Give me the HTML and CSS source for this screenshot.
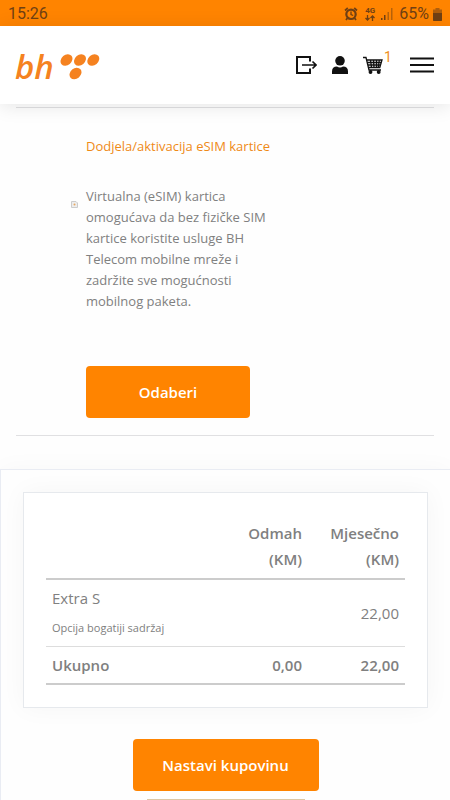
FILE: index.html
```html
<!DOCTYPE html>
<html lang="bs">
<head>
<meta charset="utf-8">
<meta name="viewport" content="width=device-width, initial-scale=1">
<title>BH Telecom</title>
<link rel="stylesheet" href="styles.css">
</head>
<body>
<div class="status">
  <span>15:26</span>
  <div class="status-icons">
    <svg width="14" height="14" viewBox="0 0 14 14" fill="none" stroke="currentColor"><circle cx="7" cy="7.3" r="4.7" stroke-width="2.200"/><path d="M7 4.500v3l2.200 1" stroke-width="1.300"/><path d="M1 3.500L3.800 1M13 3.500L10.200 1M3.300 11.200L2 13M10.700 11.200L12 13" stroke-width="1.700"/></svg>
    <div class="network"><span>4G</span><svg width="10" height="6" viewBox="0 0 10 6" fill="none" stroke="currentColor" stroke-width="1.300"><path d="M2.500 0v5M.5 3l2 2 2-2M7.500 6V1M5.500 3l2-2 2 2"/></svg></div>
    <svg class="signal" width="12" height="12" viewBox="0 0 12 12" fill="currentColor"><path d="M0 10h1.500v2H0zM3 7h1.500v5H3z"/><path d="M6.500 4H8v8H6.500zM10 0h1.500v12H10z" opacity=".5"/></svg>
    <span>65%</span>
    <svg class="battery" width="9" height="13" viewBox="0 0 9 13" fill="currentColor"><path d="M2.500 0h4v1.500H9V5H0V1.500h2.500z" opacity=".55"/><path d="M0 5h9v7.300q0 .7-.7.7H.7Q0 13 0 12.300z"/></svg>
  </div>
</div>
<header class="header">
  <a class="logo" href="#" aria-label="BH Telecom">
    <span class="logo-text">bh</span>
    <svg width="40" height="26" viewBox="0 0 40 26" fill="#f58220"><ellipse cx="6.500" cy="6" rx="6.500" ry="5.100" transform="rotate(-40 6.500 6)"/><ellipse cx="20" cy="6" rx="6.500" ry="5.100" transform="rotate(-40 20 6)"/><ellipse cx="33.300" cy="6" rx="6.500" ry="5.100" transform="rotate(-40 33.300 6)"/><ellipse cx="15.500" cy="19.500" rx="6.500" ry="5.200" transform="rotate(-40 15.500 19.500)"/></svg>
  </a>
  <nav class="nav">
    <a href="#" aria-label="Odjava"><svg width="21" height="18" viewBox="0 0 21 18" fill="none" stroke="currentColor" stroke-width="2"><path d="M14 5.500V1H1v16h13v-4.500" /><path d="M6 9h14M16.500 5.500L20 9l-3.500 3.500" stroke-width="1.600"/></svg></a>
    <a href="#" aria-label="Profil"><svg width="16" height="18" viewBox="0 0 16 18" fill="currentColor"><circle cx="8" cy="4.800" r="4.800"/><path d="M0 18v-2.500Q0 10.500 5 10.500q3 2 6 0 5 0 5 5V18z"/></svg></a>
    <a class="cart" href="#" aria-label="Korpa"><svg width="20" height="18" viewBox="0 0 20 18" fill="none" stroke="currentColor" stroke-width="1.300"><path d="M0 1.500h3L6 14h12M4 4h15l-2.200 7.500H5.500M4.500 6.500h14M5 9h12.500M7.500 4l1 7.500M10.500 4l.5 7.500M13.500 4v7.500M16.300 4l-1 7.500"/><circle cx="7.500" cy="16" r="1.300" fill="currentColor"/><circle cx="15.700" cy="16" r="1.300" fill="currentColor"/></svg><span class="count">1</span></a>
    <button class="menu" type="button" aria-label="Meni"><svg width="24" height="16" viewBox="0 0 24 16" stroke="currentColor" stroke-width="2"><path d="M0 1.500h24M0 8h24M0 14.500h24"/></svg></button>
  </nav>
</header>
<main>
  <section class="offer">
    <div class="offer-body">
      <h2>Dodjela/aktivacija eSIM kartice</h2>
      <div class="choice">
        <svg class="marker" width="7" height="7" viewBox="0 0 7 7"><path d="M.5.5h4.500L6.500 2v4.500h-6z" fill="#eee" stroke="#ccc"/><circle cx="3.500" cy="3.500" r="1" fill="#e8a860"/></svg>
        <p>Virtualna (eSIM) kartica omogućava da bez fizičke SIM kartice koristite usluge BH Telecom mobilne mreže i zadržite sve mogućnosti mobilnog paketa.</p>
      </div>
      <button class="btn btn-choose" type="button">Odaberi</button>
    </div>
  </section>
  <section class="summary">
    <div class="card">
      <table>
        <thead><tr><th></th><th>Odmah<br>(KM)</th><th class="monthly">Mjesečno<br>(KM)</th></tr></thead>
        <tbody><tr><td>Extra S<small>Opcija bogatiji sadržaj</small></td><td></td><td>22,00</td></tr></tbody>
        <tfoot><tr><th>Ukupno</th><td>0,00</td><td>22,00</td></tr></tfoot>
      </table>
    </div>
    <div class="actions">
      <button class="btn btn-next" type="button">Nastavi kupovinu</button>
      <div class="next-edge"></div>
    </div>
  </section>
</main>
</body>
</html>
```
FILE: styles.css
```css
* { box-sizing: border-box; }
html { overflow-x: hidden; scrollbar-width: none; }
body {
  margin: 0;
  background: #fefefe;
  color: #808080;
  font: 13px/21px "Open Sans", sans-serif;
}
svg { display: block; }
.status {
  display: flex;
  justify-content: space-between;
  align-items: center;
  height: 26px;
  padding: 2px 8px 0;
  background: #ff8400;
  color: #704014;
  font: 16px/24px Roboto, sans-serif;
}
.status-icons { display: flex; align-items: center; gap: 6px; }
.network {
  display: flex;
  flex-direction: column;
  align-items: center;
  margin-left: 1px;
  font: bold 8px/8px Roboto, sans-serif;
}
.battery { margin-left: -2px; }
.header {
  position: relative;
  display: flex;
  justify-content: space-between;
  align-items: center;
  height: 78px;
  padding: 0 16px 0 15px;
  background: #fff;
  box-shadow: 0 2px 18px rgba(0, 0, 0, .1);
}
.logo {
  display: flex;
  align-items: center;
  gap: 6px;
  padding-top: 4px;
  color: #f58220;
  text-decoration: none;
}
.logo-text { font: italic 600 33px/44px "Open Sans", sans-serif; }
.nav { display: flex; align-items: center; gap: 15px; }
.nav a { color: #111; text-decoration: none; }
.cart { position: relative; margin-right: 12px; }
.nav .count {
  position: absolute;
  top: -9px;
  left: 21px;
  color: #ef9022;
  font: 14px/21px Roboto, sans-serif;
}
.menu { padding: 0; border: 0; background: none; color: #111; }
.offer {
  margin: 3px 16px 0;
  border: solid #e0e0e2;
  border-width: 1px 0;
}
.offer-body { padding: 28px 70px 17px; }
h2 {
  margin: 0 0 29px;
  color: #ef8a17;
  font-size: 13px;
  font-weight: 400;
}
.choice { position: relative; margin-bottom: 54px; }
.choice p { max-width: 190px; margin: 0; }
.marker { position: absolute; top: 15px; left: -15px; }
.btn {
  display: block;
  height: 52px;
  padding: 0;
  border: 0;
  border-radius: 4px;
  background: #ff8400;
  color: #fff;
  font: 600 15px/24px "Open Sans", sans-serif;
}
.btn-choose { width: 164px; }
.summary {
  margin-top: 33px;
  padding: 22px 22px 0;
  border: solid #e9ecf3;
  border-width: 1px 0 0 1px;
  box-shadow: 0 0 24px rgba(0, 0, 0, .03);
}
.card {
  padding: 22px;
  border: 1px solid #e6e9ed;
  background: #fff;
  box-shadow: 0 0 24px rgba(0, 0, 0, .04);
}
table { width: 100%; border-collapse: collapse; font-size: 15px; line-height: 26px; }
th, td { padding: 5px 6px; text-align: right; font-weight: 400; }
th:first-child, td:first-child { text-align: left; }
thead th { padding-bottom: 6px; }
.monthly { width: 97px; }
thead th, tfoot th, tfoot td { font-weight: 600; }
thead tr { border-bottom: 2px solid #ccc; }
tbody tr { border-bottom: 1px solid #ddd; }
tfoot tr { border-bottom: 2px solid #ccc; }
small { display: block; padding-top: 4px; font-size: 11px; }
.actions {
  display: flex;
  flex-direction: column;
  align-items: center;
  gap: 8px;
  padding-top: 31px;
}
.btn-next { width: 186px; }
.next-edge { width: 158px; height: 1px; background: #ddc7a5; }
```
